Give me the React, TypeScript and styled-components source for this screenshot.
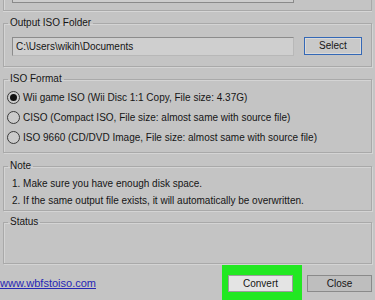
import styled, { createGlobalStyle } from "styled-components";

const GlobalStyle = createGlobalStyle`
  html, body {
    margin: 0;
    padding: 0;
    background: #c4c4c4;
  }
  * {
    box-sizing: border-box;
  }
`;

const Dialog = styled.div`
  width: 375px;
  height: 300px;
  overflow: hidden;
  background: #c4c4c4;
  font-family: "Liberation Sans", Arial, sans-serif;
  font-size: 10px;
  color: #151515;
`;

const Body = styled.div`
  display: flex;
  flex-direction: column;
  padding: 0 3px;
`;

const CutGroup = styled.div`
  height: 11px;
  border: 1px solid #a9a9a9;
  border-top: none;
  box-shadow: inset 1px 0 0 #d6d6d6, 0 1px 0 #d6d6d6;
  padding-left: 8px;
`;

const FieldStub = styled.div`
  width: 282px;
  height: 3px;
  background: #cdcdcd;
  border: 1px solid #8a8a8a;
  border-top: none;
`;

const Group = styled.fieldset<{ $gap: number; $minHeight?: number }>`
  margin: ${(p) => p.$gap}px 0 0;
  padding: 0 9px 0 8px;
  border: 1px solid #a9a9a9;
  box-shadow: inset 1px 1px 0 #d4d4d4, 1px 1px 0 #d4d4d4;
  min-height: ${(p) => (p.$minHeight ? `${p.$minHeight}px` : "auto")};
  min-width: 0;
`;

const Legend = styled.legend`
  padding: 0 2px;
  margin-left: -4px;
  line-height: 12px;
  font-size: 10px;
`;

const FolderRow = styled.div`
  display: flex;
  align-items: flex-start;
  gap: 10px;
  padding: 8px 0 10px;
`;

const PathField = styled.div`
  flex: 1;
  height: 19px;
  background: #cfcfcf;
  border: 1px solid #8c8c8c;
  border-right-color: #b8b8b8;
  border-bottom-color: #b8b8b8;
  padding: 0 3px;
  line-height: 17px;
  white-space: nowrap;
  overflow: hidden;
`;

const SelectButton = styled.div`
  width: 58px;
  height: 18px;
  border: 1px solid #3468b6;
  box-shadow: inset 0 0 0 1px #d9d9d9;
  background: #c9c9c9;
  text-align: center;
  line-height: 16px;
`;

const RadioList = styled.div`
  display: flex;
  flex-direction: column;
  padding: 2px 0 5px;
  margin-left: -5px;
`;

const RadioRow = styled.div`
  display: flex;
  align-items: center;
  gap: 3px;
  height: 20px;
  white-space: nowrap;
`;

const RadioCircle = styled.span<{ $checked: boolean }>`
  width: 13px;
  height: 13px;
  border-radius: 50%;
  border: 1px solid #3a3a3a;
  background: #cbcbcb;
  display: flex;
  align-items: center;
  justify-content: center;
  flex: none;
  &::after {
    content: "";
    width: 7px;
    height: 7px;
    border-radius: 50%;
    background: ${(p) => (p.$checked ? "#111" : "transparent")};
  }
`;

const NoteText = styled.div`
  padding: 3px 0 1px;
  line-height: 17px;
  white-space: nowrap;
`;

const Footer = styled.div`
  display: flex;
  align-items: center;
  padding: 0 3px 0 0;
  margin-top: 1px;
`;

const SiteLink = styled.a`
  color: #2626b4;
  text-decoration: underline;
  font-size: 11px;
  margin-right: auto;
`;

const Highlight = styled.div`
  background: #22e822;
  padding: 10px 9px 9px 6px;
  margin-right: 5px;
  align-self: flex-start;
`;

const Button = styled.div<{ $primary?: boolean }>`
  width: 65px;
  height: 17px;
  line-height: 15px;
  text-align: center;
  border: 1px solid ${(p) => (p.$primary ? "#9c9c9c" : "#8a8a8a")};
  background: ${(p) => (p.$primary ? "#e4e4e4" : "#bebebe")};
  margin-top: ${(p) => (p.$primary ? 0 : "0")};
`;

const ButtonSlot = styled.div`
  align-self: flex-start;
  padding-top: 10px;
`;

const formats = [
  { label: "Wii game ISO (Wii Disc 1:1 Copy, File size: 4.37G)", checked: true },
  { label: "CISO (Compact ISO, File size: almost same with source file)", checked: false },
  { label: "ISO 9660 (CD/DVD Image, File size: almost same with source file)", checked: false },
];

export default function App() {
  return (
    <>
      <GlobalStyle />
      <Dialog>
        <Body>
          <CutGroup>
            <FieldStub />
          </CutGroup>
          <Group $gap={6}>
            <Legend>Output ISO Folder</Legend>
            <FolderRow>
              <PathField>C:\Users\wikih\Documents</PathField>
              <SelectButton>Select</SelectButton>
            </FolderRow>
          </Group>
          <Group $gap={6}>
            <Legend>ISO Format</Legend>
            <RadioList>
              {formats.map((f) => (
                <RadioRow key={f.label}>
                  <RadioCircle $checked={f.checked} />
                  {f.label}
                </RadioRow>
              ))}
            </RadioList>
          </Group>
          <Group $gap={7}>
            <Legend>Note</Legend>
            <NoteText>
              1. Make sure you have enough disk space.
              <br />
              2. If the same output file exists, it will automatically be overwritten.
            </NoteText>
          </Group>
          <Group $gap={5} $minHeight={48}>
            <Legend>Status</Legend>
          </Group>
        </Body>
        <Footer>
          <SiteLink href="#">www.wbfstoiso.com</SiteLink>
          <Highlight>
            <Button $primary>Convert</Button>
          </Highlight>
          <ButtonSlot>
            <Button>Close</Button>
          </ButtonSlot>
        </Footer>
      </Dialog>
    </>
  );
}
